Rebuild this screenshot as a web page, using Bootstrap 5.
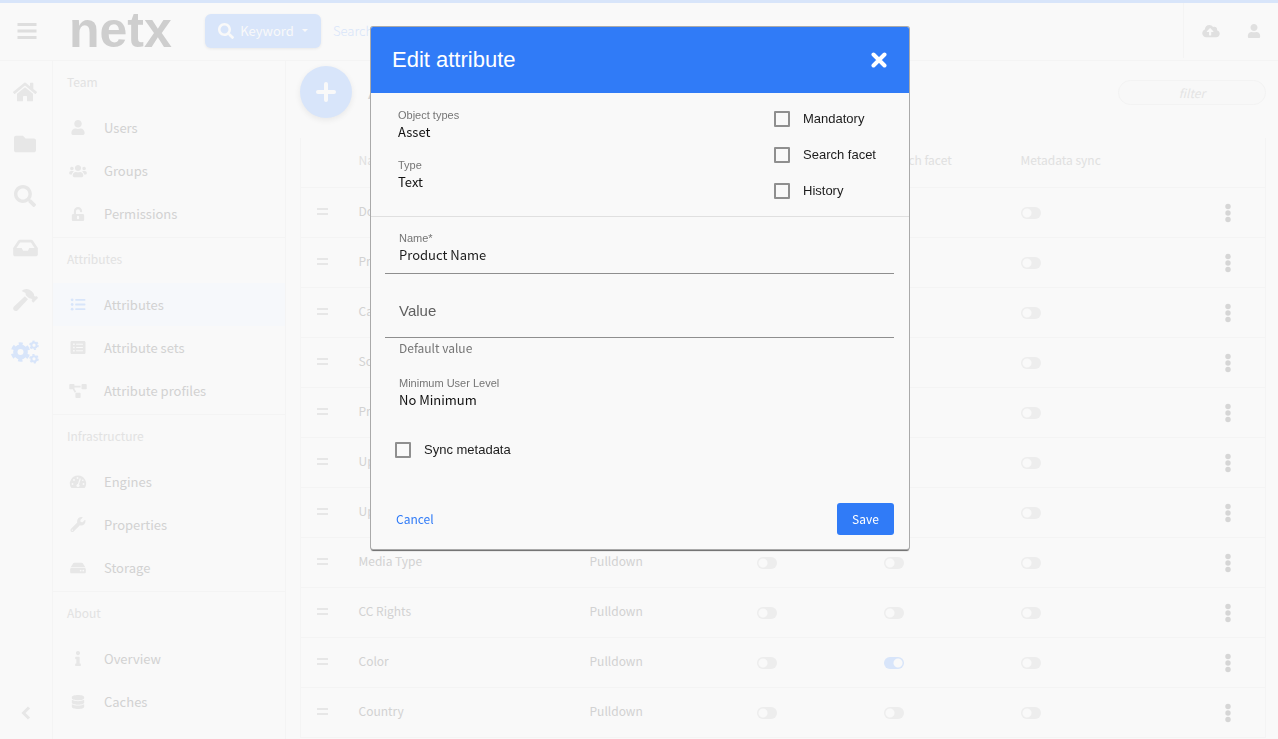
<!DOCTYPE html>
<html lang="en">
<head>
<meta charset="utf-8">
<meta name="viewport" content="width=device-width, initial-scale=1">
<title>NetX - Edit attribute</title>
<link href="https://cdn.jsdelivr.net/npm/bootstrap@5.3.0/dist/css/bootstrap.min.css" rel="stylesheet">
<style>
:root{--ui:"Noto Sans CJK SC","Source Sans Pro",sans-serif;--sys:"Liberation Sans",Arial,sans-serif;--page:#f9f9f9;--rule:#f4f4f4;--pale:#d8e5fa;--icon:#e7e7e7;--ink:#d2d2d2;--blue:#307bf7}
body{font-family:var(--ui);font-size:13px;line-height:20px;background:var(--page);color:var(--ink);height:100vh;overflow:hidden}
svg{fill:currentColor;display:block}
button{font-family:inherit}
.topbar{height:60px;border-top:3px solid var(--pale);padding-bottom:2px}
.menu-btn{width:53px;color:#dedede}
.logo{font:bold 50px/55px var(--sys);color:#cecece;width:152px;padding-left:16px;text-decoration:none}
.kw{height:34px;width:116px;background:var(--pale);color:var(--page);font-size:13px;line-height:20px;gap:6px;box-shadow:0 1px 3px #0001}
.kw:after{content:"";margin-left:2px;border:3px solid transparent;border-top-color:currentColor;border-bottom:0}
.search-box{background:none;border:0;color:var(--pale);font-size:13px;font-weight:300;outline:0;margin-left:10px}
.search-box::placeholder{color:var(--pale);opacity:1}
.tools{border-left:1px solid var(--rule);width:95px;gap:23px;padding-left:17px;color:#e0e0e0}
.rail{width:53px;border-top:1px solid var(--rule);border-right:1px solid var(--rule);padding-top:5px;color:var(--icon)}
.rail a{height:52px;width:50px;color:inherit}
.rail a.on,.side a.on svg{color:var(--pale)}
.side{width:233px;border-right:1px solid var(--rule);overflow:hidden}
.side section{border-top:1px solid var(--rule);padding-bottom:2px}
.side h2{font-size:12px;line-height:20px;font-weight:400;color:#e2e2e2;margin:0;padding:11px 14px 14px}
.side a{height:43px;font-size:13px;color:var(--ink);text-decoration:none;padding-left:11px;gap:12px}
.side a svg{width:28px;color:var(--icon)}
.side a.on{background:#f6f8fb}
.main-area{border-top:1px solid var(--rule);min-width:0;padding:5px 12px 0 14px}
.add{width:52px;height:52px;background:var(--pale);color:var(--page);box-shadow:0 2px 6px #00000012}
.main-area h1{font:20px/28px var(--sys);margin:0;color:var(--ink)}
.filter{width:148px;height:25px;border:1px solid #f3f3f3;border-radius:13px;background:#f8f8f8;text-align:center;font-size:12px;font-style:italic;color:var(--ink);outline:0}
.filter::placeholder{color:#e4e4e4;opacity:1}
.grid{table-layout:fixed;font-size:12px;line-height:20px;border:solid var(--rule);border-width:0 1px;margin-top:20px;width:100%}
.grid th,.grid td{padding:0;height:50px;border-bottom:1px solid var(--rule);font-weight:400;color:var(--ink);vertical-align:middle}
.grid th{height:49px;color:#e0e0e0;padding-bottom:5px}
.grid td{padding-bottom:2px}
.grip{border:solid var(--icon);border-width:2px 0;width:11px;height:7px;margin-left:16px}
.grid .form-check-input{display:block;width:20px;height:12px;margin:3px 0 0;border:0;border-radius:6px;background:#ededed radial-gradient(circle at 6px 6px,var(--page) 4px,transparent 5px);box-shadow:none;cursor:pointer}
.grid .form-check-input:checked{background:var(--pale) radial-gradient(circle at 14px 6px,var(--page) 4px,transparent 5px)}
.dots{color:#d6d6d6;margin-top:3px}
.modal{display:block;padding-left:2px;overflow:hidden}
.modal-dialog{max-width:538px;margin:27px auto}
.modal-content{border:0;border-radius:2px;background:#f9f9f9;color:#1c1c1c;box-shadow:0 0 0 1px #aaa,0 2px 1px #666;overflow:hidden;font-family:var(--sys)}
.modal-header{background:var(--blue);color:#fff;height:66px;padding:0 22px 0 21px;border:0;border-radius:0}
.modal-title{font-size:22px;line-height:28px;font-weight:400}
.cap{font-size:11px;line-height:16px;color:#757575;display:block}
.val{font:13px/18px var(--ui);color:#111;display:block}
.info-part{height:124px;border-bottom:1px solid #e0e0e0;padding:14px 33px 0 27px}
.checks{gap:18px;padding-top:3px}
.check{display:flex;align-items:center;gap:13px;font-size:13px;line-height:18px;min-height:18px;margin:0;padding:0}
.check .form-check-input{width:16px;height:16px;border:2px solid #8f8f8f;border-radius:1px;background-color:transparent;margin:0;float:none}
.fields{padding:13px 15px 14px 14px}
.line-field{border-bottom:1px solid #8f8f8f;padding:0 14px 10px;display:block}
.line-field input{display:block;width:100%;border:0;background:none;padding:0;outline:0;color:#1c1c1c}
.name-in{font:13px/18px var(--ui);height:17px}
.line-field.tall{padding-top:26px;padding-bottom:15px}
.value-in{font:15px/22px var(--sys);height:22px}
.value-in::placeholder{color:#5f5f5f;opacity:1}
.cap.help{font:12px/20px var(--ui);padding-left:14px}
.level{padding:17px 14px 0}
.sync{padding:32px 10px 0}
.cancel{color:var(--blue);font:12px/20px var(--ui);padding:0 11px;border:0;background:none}
.save{background:var(--blue);color:#fff;font:12px/20px var(--ui);width:57px;height:32px;border:0;border-radius:3px;padding:0}
.actions{padding-top:44px}
</style>
</head>
<body class="d-flex flex-column">
<svg width="0" height="0" class="position-absolute" aria-hidden="true">
<symbol id="user" viewBox="0 0 448 512"><path d="M224 256c70.7 0 128-57.3 128-128S294.7 0 224 0 96 57.3 96 128s57.3 128 128 128zm89.6 32h-16.7c-22.2 10.2-46.9 16-72.9 16s-50.6-5.8-72.9-16h-16.7C60.2 288 0 348.2 0 422.4V464c0 26.5 21.5 48 48 48h352c26.5 0 48-21.5 48-48v-41.6c0-74.2-60.2-134.4-134.4-134.4z"/></symbol>
<symbol id="folder" viewBox="0 0 512 512"><path d="M464 128H272l-64-64H48C21.49 64 0 85.49 0 112v288c0 26.51 21.49 48 48 48h416c26.51 0 48-21.49 48-48V176c0-26.51-21.49-48-48-48z"/></symbol>
<symbol id="search" viewBox="0 0 512 512"><path d="M505 442.7L405.3 343c-4.5-4.5-10.6-7-17-7H372c27.6-35.3 44-79.7 44-128C416 93.1 322.9 0 208 0S0 93.1 0 208s93.1 208 208 208c48.3 0 92.7-16.4 128-44v16.3c0 6.4 2.5 12.5 7 17l99.7 99.7c9.4 9.4 24.6 9.4 33.9 0l28.3-28.3c9.4-9.4 9.4-24.6.1-34zM208 336c-70.7 0-128-57.2-128-128 0-70.7 57.2-128 128-128 70.7 0 128 57.2 128 128 0 70.7-57.2 128-128 128z"/></symbol>
<symbol id="inbox" viewBox="0 0 576 512"><path d="M567.938 243.908L462.25 85.374A48.003 48.003 0 0 0 422.311 64H153.689a48 48 0 0 0-39.938 21.374L8.062 243.908A47.994 47.994 0 0 0 0 270.533V400c0 26.51 21.49 48 48 48h480c26.51 0 48-21.49 48-48V270.533a47.994 47.994 0 0 0-8.062-26.625zM162.252 128h251.497l85.333 128H376l-32 64H232l-32-64H76.918l85.334-128z"/></symbol>
<symbol id="home" viewBox="0 0 576 512"><path d="M280.37 148.26L96 300.11V464a16 16 0 0 0 16 16l112.06-.29a16 16 0 0 0 15.92-16V368a16 16 0 0 1 16-16h64a16 16 0 0 1 16 16v95.64a16 16 0 0 0 16 16.05L464 480a16 16 0 0 0 16-16V300L295.67 148.26a12.19 12.19 0 0 0-15.3 0zM571.6 251.47L488 182.56V44.05a12 12 0 0 0-12-12h-56a12 12 0 0 0-12 12v72.61L318.47 43a48 48 0 0 0-61 0L4.34 251.47a12 12 0 0 0-1.6 16.9l25.5 31A12 12 0 0 0 45.15 301l235.22-193.74a12.19 12.19 0 0 1 15.3 0L530.9 301a12 12 0 0 0 16.9-1.6l25.5-31a12 12 0 0 0-1.7-16.93z"/></symbol>
<symbol id="hammer" viewBox="0 0 576 512"><path d="M571.31 193.94l-22.63-22.63c-6.25-6.25-16.38-6.25-22.63 0l-11.31 11.31-28.9-28.9c5.63-21.31.36-44.9-16.35-61.61l-45.25-45.25c-62.48-62.48-163.79-62.48-226.28 0l90.51 45.25v18.75c0 16.97 6.74 33.25 18.75 45.25l49.14 49.14c16.71 16.71 40.3 21.98 61.61 16.35l28.9 28.9-11.31 11.31c-6.25 6.25-6.25 16.38 0 22.63l22.63 22.63c6.25 6.25 16.38 6.25 22.63 0l90.51-90.51c6.23-6.24 6.23-16.37-.02-22.62zm-286.72-15.2c-3.7-3.7-6.84-7.79-9.85-11.95L19.64 404.96c-25.57 23.88-26.26 64.19-1.53 88.93s65.05 24.05 88.92-1.53l238.13-255.07c-3.96-2.91-7.9-5.87-11.44-9.41l-49.13-49.14z"/></symbol>
<symbol id="cogs" viewBox="0 0 28 24"><g fill="none" stroke="currentColor"><circle cx="9.5" cy="12" r="5.2" stroke-width="4.4"/><circle cx="9.5" cy="12" r="8.2" stroke-width="3" stroke-dasharray="4.3 4.29" stroke-dashoffset="2.1" transform="rotate(-90 9.5 12)"/><circle cx="23" cy="5.2" r="2.6" stroke-width="2"/><circle cx="23" cy="5.2" r="4" stroke-width="1.6" stroke-dasharray="2.1 2.09"/><circle cx="23" cy="18.8" r="2.6" stroke-width="2"/><circle cx="23" cy="18.8" r="4" stroke-width="1.6" stroke-dasharray="2.1 2.09"/></g></symbol>
<symbol id="list" viewBox="0 0 16 14"><circle cx="1.7" cy="2" r="1.5"/><circle cx="1.7" cy="7" r="1.5"/><circle cx="1.7" cy="12" r="1.5"/><rect x="5" y="1" width="11" height="2" rx=".5"/><rect x="5" y="6" width="11" height="2" rx=".5"/><rect x="5" y="11" width="11" height="2" rx=".5"/></symbol>
<symbol id="listalt" viewBox="0 0 512 512"><path fill-rule="evenodd" d="M464 480H48c-26.5 0-48-21.5-48-48V80c0-26.5 21.5-48 48-48h416c26.5 0 48 21.5 48 48v352c0 26.5-21.5 48-48 48zM88 116h56v56H88zM88 228h56v56H88zM88 340h56v56H88zM192 124h232v40H192zM192 236h232v40H192zM192 348h232v40H192z"/></symbol>
<symbol id="diagram" viewBox="0 0 640 512"><path d="M384 320H256c-17.67 0-32 14.33-32 32v128c0 17.67 14.33 32 32 32h128c17.67 0 32-14.33 32-32V352c0-17.67-14.33-32-32-32zM192 32c0-17.67-14.33-32-32-32H32C14.33 0 0 14.33 0 32v128c0 17.67 14.33 32 32 32h95.72l73.16 128.04C211.98 300.98 232.4 288 256 288h.28L192 175.51V128h224V64H192V32zM608 0H480c-17.67 0-32 14.33-32 32v128c0 17.67 14.33 32 32 32h128c17.67 0 32-14.33 32-32V32c0-17.67-14.33-32-32-32z"/></symbol>
<symbol id="unlock" viewBox="0 0 448 512"><path d="M400 256H152V152.9c0-39.6 31.7-72.5 71.3-72.9 40-.4 72.7 32.1 72.7 72v16c0 13.3 10.7 24 24 24h32c13.3 0 24-10.7 24-24v-16C376 68 307.5-.3 223.5 0 139.5.3 72 69.5 72 153.5V256H48c-26.5 0-48 21.5-48 48v160c0 26.5 21.5 48 48 48h352c26.5 0 48-21.5 48-48V304c0-26.5-21.5-48-48-48zM264 408c0 22.1-17.9 40-40 40s-40-17.9-40-40v-48c0-22.1 17.9-40 40-40s40 17.9 40 40v48z"/></symbol>
<symbol id="wrench" viewBox="0 0 512 512"><path d="M507.73 109.1c-2.24-9.03-13.54-12.09-20.12-5.51l-74.36 74.36-67.88-11.31-11.31-67.88 74.36-74.36c6.62-6.62 3.43-17.9-5.66-20.16-47.38-11.74-99.55.91-136.58 37.93-39.64 39.64-50.55 97.1-34.05 147.2L18.74 402.76c-24.99 24.99-24.99 65.51 0 90.5 24.99 24.99 65.51 24.99 90.5 0l213.21-213.21c50.12 16.71 107.47 5.68 147.37-34.22 37.07-37.07 49.7-89.32 37.91-136.73zM64 472c-13.25 0-24-10.75-24-24 0-13.26 10.75-24 24-24s24 10.74 24 24c0 13.25-10.75 24-24 24z"/></symbol>
<symbol id="hdd" viewBox="0 0 576 512"><path d="M576 304v96c0 26.51-21.49 48-48 48H48c-26.51 0-48-21.49-48-48v-96c0-26.51 21.49-48 48-48h480c26.51 0 48 21.49 48 48zm-48-80a79.557 79.557 0 0 1 30.777 6.165L462.25 85.374A48.003 48.003 0 0 0 422.311 64H153.689a48 48 0 0 0-39.938 21.374L17.223 230.165A79.557 79.557 0 0 1 48 224h480zm-48 96c-17.673 0-32 14.327-32 32s14.327 32 32 32 32-14.327 32-32-14.327-32-32-32zm-96 0c-17.673 0-32 14.327-32 32s14.327 32 32 32 32-14.327 32-32-14.327-32-32-32z"/></symbol>
<symbol id="info" viewBox="0 0 192 512"><path d="M20 424.229h20V279.771H20c-11.046 0-20-8.954-20-20V212c0-11.046 8.954-20 20-20h112c11.046 0 20 8.954 20 20v212.229h20c11.046 0 20 8.954 20 20V492c0 11.046-8.954 20-20 20H20c-11.046 0-20-8.954-20-20v-47.771c0-11.046 8.954-20 20-20zM96 0C56.235 0 24 32.235 24 72s32.235 72 72 72 72-32.235 72-72S135.764 0 96 0z"/></symbol>
<symbol id="database" viewBox="0 0 448 512"><path d="M448 73.143v45.714C448 159.143 347.667 192 224 192S0 159.143 0 118.857V73.143C0 32.857 100.333 0 224 0s224 32.857 224 73.143zM448 176v102.857C448 319.143 347.667 352 224 352S0 319.143 0 278.857V176c48.125 33.143 136.208 48.572 224 48.572S399.874 209.143 448 176zm0 160v102.857C448 479.143 347.667 512 224 512S0 479.143 0 438.857V336c48.125 33.143 136.208 48.572 224 48.572S399.874 369.143 448 336z"/></symbol>
<symbol id="cloud" viewBox="0 0 640 512"><path d="M537.6 226.6c4.1-10.7 6.4-22.4 6.4-34.6 0-53-43-96-96-96-19.7 0-38.1 6-53.3 16.2C367 64.2 315.3 32 256 32c-88.4 0-160 71.6-160 160 0 2.7.1 5.4.2 8.1C40.2 219.8 0 273.2 0 336c0 79.5 64.5 144 144 144h368c70.7 0 128-57.3 128-128 0-61.9-44-113.6-102.4-125.4zM393.4 288H328v112c0 8.8-7.2 16-16 16h-48c-8.8 0-16-7.2-16-16V288h-65.4c-14.3 0-21.4-17.2-11.3-27.3l105.4-105.4c6.2-6.2 16.4-6.2 22.6 0l105.4 105.4c10.1 10.1 2.9 27.3-11.3 27.3z"/></symbol>
<symbol id="users" viewBox="0 0 640 512"><path d="M96 224c35.3 0 64-28.7 64-64s-28.7-64-64-64-64 28.7-64 64 28.7 64 64 64zm448 0c35.3 0 64-28.7 64-64s-28.7-64-64-64-64 28.7-64 64 28.7 64 64 64zm32 32h-64c-17.6 0-33.5 7.1-45.1 18.6 40.3 22.1 68.9 62 75.1 109.4h66c17.7 0 32-14.3 32-32v-32c0-35.3-28.7-64-64-64zm-256 0c61.9 0 112-50.1 112-112S381.9 32 320 32 208 82.1 208 144s50.1 112 112 112zm76.8 32h-8.3c-20.8 10-43.9 16-68.5 16s-47.6-6-68.5-16h-8.3C179.6 288 128 339.6 128 403.2V432c0 26.5 21.5 48 48 48h288c26.5 0 48-21.5 48-48v-28.8c0-63.6-51.6-115.2-115.2-115.2zm-223.7-13.4C161.5 263.1 145.6 256 128 256H64c-35.3 0-64 28.7-64 64v32c0 17.7 14.3 32 32 32h65.9c6.3-47.4 34.9-87.3 75.2-109.4z"/></symbol>
<symbol id="gauge" viewBox="0 0 16 14"><path d="M8 .5a8 8 0 0 0-7 12c.2.4.6.5 1 .5h12c.4 0 .8-.1 1-.5A8 8 0 0 0 8 .5z"/><g fill="#f9f9f9"><circle cx="2.5" cy="9" r=".9"/><circle cx="4" cy="5" r=".9"/><circle cx="7.5" cy="3" r=".9"/><circle cx="13.5" cy="9" r=".9"/><circle cx="12.8" cy="5.3" r=".8"/><circle cx="8" cy="10.5" r="1.6"/></g><path d="M8 10.5 10.3 3.5" stroke="#f9f9f9" stroke-width="1.1"/></symbol>
</svg>

<header class="topbar d-flex align-items-center flex-shrink-0">
  <button class="menu-btn btn border-0 p-0 d-flex justify-content-center" aria-label="Menu"><svg width="20" height="18" viewBox="0 0 20 18"><path d="M.5 1h19v3H.5zM.5 7.5h19v3H.5zM.5 14h19v3H.5z"/></svg></button>
  <a href="#" class="logo">netx</a>
  <button class="kw btn border-0 p-0 d-flex align-items-center justify-content-center"><svg width="16" height="16"><use href="#search"/></svg>Keyword</button>
  <input class="search-box flex-fill" type="text" placeholder="Search" aria-label="Search">
  <div class="tools d-flex align-items-center align-self-stretch">
    <button class="btn border-0 p-0 text-reset" aria-label="Upload"><svg width="20" height="14"><use href="#cloud"/></svg></button>
    <button class="btn border-0 p-0 text-reset" aria-label="Account"><svg width="20" height="14"><use href="#user"/></svg></button>
  </div>
</header>

<div class="d-flex flex-fill overflow-hidden">
  <nav class="rail d-flex flex-column flex-shrink-0" aria-label="Main">
    <a href="#" aria-label="Home" class="d-flex align-items-center justify-content-center"><svg width="24" height="22"><use href="#home"/></svg></a>
    <a href="#" aria-label="Folders" class="d-flex align-items-center justify-content-center"><svg width="22" height="22"><use href="#folder"/></svg></a>
    <a href="#" aria-label="Search" class="d-flex align-items-center justify-content-center"><svg width="22" height="22"><use href="#search"/></svg></a>
    <a href="#" aria-label="Inbox" class="d-flex align-items-center justify-content-center"><svg width="25" height="22"><use href="#inbox"/></svg></a>
    <a href="#" aria-label="Tools" class="d-flex align-items-center justify-content-center"><svg width="25" height="22"><use href="#hammer"/></svg></a>
    <a href="#" aria-label="System" class="on d-flex align-items-center justify-content-center"><svg width="28" height="24"><use href="#cogs"/></svg></a>
    <a href="#" aria-label="Collapse" class="mt-auto w-100 d-flex align-items-center justify-content-center"><svg width="10" height="14" viewBox="0 0 10 14"><path d="M8 1.5 2.5 7 8 12.5" fill="none" stroke="currentColor" stroke-width="3"/></svg></a>
  </nav>

  <nav class="side flex-shrink-0" aria-label="System">
    <section><h2>Team</h2>
      <a href="#" class="d-flex align-items-center"><svg height="15"><use href="#user"/></svg>Users</a>
      <a href="#" class="d-flex align-items-center"><svg height="14"><use href="#users"/></svg>Groups</a>
      <a href="#" class="d-flex align-items-center"><svg height="14"><use href="#unlock"/></svg>Permissions</a></section>
    <section><h2>Attributes</h2>
      <a href="#" class="on d-flex align-items-center"><svg height="13"><use href="#list"/></svg>Attributes</a>
      <a href="#" class="d-flex align-items-center"><svg height="15"><use href="#listalt"/></svg>Attribute sets</a>
      <a href="#" class="d-flex align-items-center"><svg height="14"><use href="#diagram"/></svg>Attribute profiles</a></section>
    <section><h2>Infrastructure</h2>
      <a href="#" class="d-flex align-items-center"><svg height="14"><use href="#gauge"/></svg>Engines</a>
      <a href="#" class="d-flex align-items-center"><svg height="15"><use href="#wrench"/></svg>Properties</a>
      <a href="#" class="d-flex align-items-center"><svg height="14"><use href="#hdd"/></svg>Storage</a></section>
    <section><h2>About</h2>
      <a href="#" class="d-flex align-items-center"><svg height="15"><use href="#info"/></svg>Overview</a>
      <a href="#" class="d-flex align-items-center"><svg height="14"><use href="#database"/></svg>Caches</a></section>
  </nav>

  <main class="main-area flex-fill">
    <div class="d-flex align-items-center">
      <button class="add btn border-0 rounded-circle p-0 d-flex align-items-center justify-content-center" aria-label="Add attribute"><svg width="20" height="20" viewBox="0 0 20 20"><path d="M10 2v16M2 10h16" stroke="currentColor" stroke-width="4" stroke-linecap="round"/></svg></button>
      <h1 class="ms-3">Attributes</h1>
      <input class="filter ms-auto" type="text" placeholder="filter" aria-label="Filter">
    </div>
    <table class="grid">
      <colgroup><col style="width:58px"><col><col style="width:167px"><col style="width:127px"><col style="width:137px"><col style="width:204px"><col style="width:41px"></colgroup>
      <thead><tr><th></th><th>Name</th><th>Type</th><th>Mandatory</th><th>Search facet</th><th>Metadata sync</th><th></th></tr></thead>
      <tbody id="rows"></tbody>
    </table>
  </main>
</div>

<div class="modal" tabindex="-1" role="dialog" aria-labelledby="dlgTitle">
  <div class="modal-dialog">
    <form class="modal-content" onsubmit="return false">
      <div class="modal-header">
        <h2 class="modal-title" id="dlgTitle">Edit attribute</h2>
        <button type="button" class="btn border-0 p-0 text-white" aria-label="Close"><svg width="16" height="16" viewBox="0 0 16 16"><path d="M2.5 2.5l11 11M13.5 2.5l-11 11" stroke="currentColor" stroke-width="4" stroke-linecap="round"/></svg></button>
      </div>
      <div class="info-part d-flex justify-content-between">
        <div>
          <div><span class="cap">Object types</span><span class="val">Asset</span></div>
          <div class="mt-3"><span class="cap">Type</span><span class="val">Text</span></div>
        </div>
        <div class="checks d-flex flex-column">
          <label class="check"><input class="form-check-input" type="checkbox">Mandatory</label>
          <label class="check"><input class="form-check-input" type="checkbox">Search facet</label>
          <label class="check"><input class="form-check-input" type="checkbox">History</label>
        </div>
      </div>
      <div class="fields">
        <label class="line-field"><span class="cap">Name*</span><input class="name-in" type="text" value="Product Name"></label>
        <div class="line-field tall"><input class="value-in" type="text" placeholder="Value" aria-label="Value" aria-describedby="valueHelp"></div>
        <span class="cap help" id="valueHelp">Default value</span>
        <div class="level"><span class="cap">Minimum User Level</span><span class="val">No Minimum</span></div>
        <label class="check sync"><input class="form-check-input" type="checkbox">Sync metadata</label>
        <div class="actions d-flex align-items-center justify-content-between">
          <button type="button" class="cancel">Cancel</button>
          <button type="submit" class="save">Save</button>
        </div>
      </div>
    </form>
  </div>
</div>

<script src="https://cdn.jsdelivr.net/npm/bootstrap@5.3.0/dist/js/bootstrap.bundle.min.js"></script>
<script>
const names = ['Document', 'Product Name', 'Category', 'Source', 'Project', 'Updated', 'Ups', 'Media Type', 'CC Rights', 'Color', 'Country'];
const toggle = (label, on) => `<td><input class="form-check-input" type="checkbox" role="switch" aria-label="${label}"${on ? ' checked' : ''}></td>`;
document.getElementById('rows').innerHTML = names.map(n => `<tr>
  <td><div class="grip"></div></td><td>${n}</td><td>Pulldown</td>
  ${toggle(n + ' mandatory')}${toggle(n + ' search facet', n === 'Color')}${toggle(n + ' metadata sync')}
  <td><button class="btn border-0 p-0 dots" aria-label="${n} actions"><svg width="6" height="20" viewBox="0 0 6 20"><circle cx="3" cy="3.5" r="2.7"/><circle cx="3" cy="10" r="2.7"/><circle cx="3" cy="16.5" r="2.7"/></svg></button></td></tr>`).join('');
</script>
</body>
</html>
